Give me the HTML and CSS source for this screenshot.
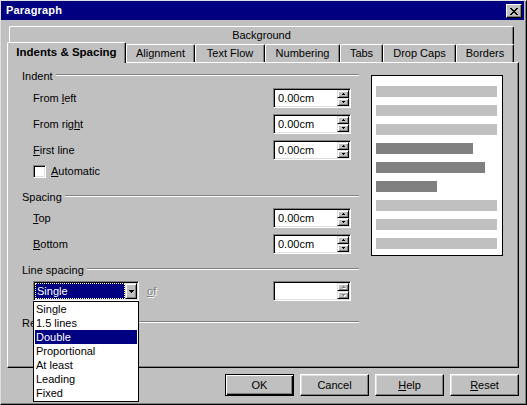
FILE: index.html
```html
<!DOCTYPE html>
<html>
<head>
<meta charset="utf-8">
<title>Paragraph</title>
<link rel="stylesheet" href="styles.css">
</head>
<body>
<div class="window">
  <div class="titlebar">
    <span class="title">Paragraph</span>
    <span class="close"><svg width="8" height="7" viewBox="0 0 8 7" shape-rendering="crispEdges"><path fill="#000" d="M0 0h2v1H0z M6 0h2v1H6z M1 1h2v1H1z M5 1h2v1H5z M2 2h4v1H2z M3 3h2v1H3z M2 4h4v1H2z M1 5h2v1H1z M5 5h2v1H5z M0 6h2v1H0z M6 6h2v1H6z"/></svg></span>
  </div>
  <div class="client">
    <div class="tabs">
      <div class="tabrow back">
        <div class="tab tab-bg">Background</div>
      </div>
      <div class="tabrow front">
        <div class="tab sel w-indent">Indents &amp; Spacing</div>
        <div class="tab w-align">Alignment</div>
        <div class="tab w-flow">Text Flow</div>
        <div class="tab w-num">Numbering</div>
        <div class="tab w-tabs">Tabs</div>
        <div class="tab w-drop">Drop Caps</div>
        <div class="tab w-bord">Borders</div>
      </div>
    </div>
    <div class="panel">
      <div class="leftcol">
        <div class="gtitle g-indent"><span>Indent</span></div>
        <div class="row first">
          <span class="lbl">From <u>l</u>eft</span>
          <div class="spin"><span class="val">0.00cm</span><span class="spinbtns"><span class="sb"><svg width="3" height="2" viewBox="0 0 3 2" shape-rendering="crispEdges"><path d="M1 0h1v1h1v1H0V1h1z"/></svg></span><span class="sb"><svg width="3" height="2" viewBox="0 0 3 2" shape-rendering="crispEdges"><path d="M0 0h3v1H2v1H1V1H0z"/></svg></span></span></div>
        </div>
        <div class="row">
          <span class="lbl">From rig<u>h</u>t</span>
          <div class="spin"><span class="val">0.00cm</span><span class="spinbtns"><span class="sb"><svg width="3" height="2" viewBox="0 0 3 2" shape-rendering="crispEdges"><path d="M1 0h1v1h1v1H0V1h1z"/></svg></span><span class="sb"><svg width="3" height="2" viewBox="0 0 3 2" shape-rendering="crispEdges"><path d="M0 0h3v1H2v1H1V1H0z"/></svg></span></span></div>
        </div>
        <div class="row">
          <span class="lbl"><u>F</u>irst line</span>
          <div class="spin"><span class="val">0.00cm</span><span class="spinbtns"><span class="sb"><svg width="3" height="2" viewBox="0 0 3 2" shape-rendering="crispEdges"><path d="M1 0h1v1h1v1H0V1h1z"/></svg></span><span class="sb"><svg width="3" height="2" viewBox="0 0 3 2" shape-rendering="crispEdges"><path d="M0 0h3v1H2v1H1V1H0z"/></svg></span></span></div>
        </div>
        <div class="checkrow">
          <span class="checkbox"></span>
          <span class="lbl"><u>A</u>utomatic</span>
        </div>

        <div class="gtitle g-spacing"><span>Spacing</span></div>
        <div class="row first2">
          <span class="lbl"><u>T</u>op</span>
          <div class="spin"><span class="val">0.00cm</span><span class="spinbtns"><span class="sb"><svg width="3" height="2" viewBox="0 0 3 2" shape-rendering="crispEdges"><path d="M1 0h1v1h1v1H0V1h1z"/></svg></span><span class="sb"><svg width="3" height="2" viewBox="0 0 3 2" shape-rendering="crispEdges"><path d="M0 0h3v1H2v1H1V1H0z"/></svg></span></span></div>
        </div>
        <div class="row">
          <span class="lbl"><u>B</u>ottom</span>
          <div class="spin"><span class="val">0.00cm</span><span class="spinbtns"><span class="sb"><svg width="3" height="2" viewBox="0 0 3 2" shape-rendering="crispEdges"><path d="M1 0h1v1h1v1H0V1h1z"/></svg></span><span class="sb"><svg width="3" height="2" viewBox="0 0 3 2" shape-rendering="crispEdges"><path d="M0 0h3v1H2v1H1V1H0z"/></svg></span></span></div>
        </div>

        <div class="gtitle g-line"><span>Line spacing</span></div>
        <div class="comborow">
          <div class="combo-wrap">
            <div class="combo">
              <span class="combo-sel">Single</span>
              <span class="combo-btn"><svg width="5" height="3" viewBox="0 0 5 3" shape-rendering="crispEdges"><path d="M0 0h5v1H4v1H3v1H2V2H1V1H0z"/></svg></span>
            </div>
            <ul class="listbox">
              <li>Single</li>
              <li>1.5 lines</li>
              <li class="hl">Double</li>
              <li>Proportional</li>
              <li>At least</li>
              <li>Leading</li>
              <li>Fixed</li>
            </ul>
          </div>
          <span class="disabled"><u>o</u>f</span>
          <div class="spin off"><span class="val"></span><span class="spinbtns"><span class="sb"><svg width="3" height="2" viewBox="0 0 3 2" shape-rendering="crispEdges"><path d="M1 0h1v1h1v1H0V1h1z"/></svg></span><span class="sb"><svg width="3" height="2" viewBox="0 0 3 2" shape-rendering="crispEdges"><path d="M0 0h3v1H2v1H1V1H0z"/></svg></span></span></div>
        </div>

        <div class="gtitle g-reg"><span>Register-true</span></div>
      </div>
      <div class="preview">
        <div class="bar light" style="width:121px"></div>
        <div class="bar light" style="width:121px"></div>
        <div class="bar light" style="width:121px"></div>
        <div class="bar dark" style="width:97px"></div>
        <div class="bar dark" style="width:109px"></div>
        <div class="bar dark" style="width:61px"></div>
        <div class="bar light" style="width:121px"></div>
        <div class="bar light" style="width:121px"></div>
        <div class="bar light" style="width:121px"></div>
      </div>
    </div>
    <div class="buttons">
      <div class="btn default">OK</div>
      <div class="btn">Cancel</div>
      <div class="btn"><span><u>H</u>elp</span></div>
      <div class="btn"><span><u>R</u>eset</span></div>
    </div>
  </div>
</div>
</body>
</html>
```
FILE: styles.css
```css
* { box-sizing: border-box; }
html, body { margin: 0; padding: 0; }
body {
  background: #c0c0c0;
  font-family: "Liberation Sans", Arial, sans-serif;
  font-size: 11px;
  line-height: 13px;
  color: #000;
}
u { text-decoration: underline; text-underline-offset: 1px; }

.window {
  width: 527px;
  height: 405px;
  background: #c0c0c0;
  border: 1px solid;
  border-color: #dfdfdf #000 #000 #dfdfdf;
  box-shadow: inset -1px -1px 0 #808080;
  padding: 0 2px 0 0;
  display: flex;
  flex-direction: column;
  overflow: hidden;
}

.titlebar {
  height: 19px;
  background: #000080;
  color: #fff;
  display: flex;
  align-items: center;
  justify-content: space-between;
  padding: 0 2px 0 5px;
}
.title { font-weight: bold; font-size: 11px; letter-spacing: 0.2px; }
.close {
  width: 16px;
  height: 14px;
  background: #c0c0c0;
  border: 1px solid;
  border-color: #fff #000 #000 #fff;
  box-shadow: inset -1px -1px 0 #808080;
  display: flex;
  align-items: center;
  justify-content: center;
  margin-top: 1px;
}

.client { padding: 6px 5px 0 6px; flex: 1; display: flex; flex-direction: column; }

.tabs { height: 36px; }
.tabrow { height: 18px; display: flex; }
.tabrow.back { padding-left: 2px; }
.tab {
  height: 18px;
  border-left: 1px solid #fff;
  border-top: 1px solid #fff;
  border-right: 1px solid #000;
  box-shadow: inset -1px 0 0 #808080;
  border-radius: 2px 2px 0 0;
  background: #c0c0c0;
  display: flex;
  align-items: center;
  justify-content: center;
  white-space: nowrap;
}
.tab-bg { width: 505px; padding-bottom: 1px; }
.tabrow.front { align-items: flex-start; }
.tab.sel {
  height: 21px;
  margin-top: -2px;
  position: relative;
  z-index: 2;
  font-weight: bold;
  font-size: 11.5px;
  padding-bottom: 2px;
}
.w-indent { width: 119px; }
.w-align { width: 69px; }
.w-flow { width: 70px; }
.w-num { width: 75px; }
.w-tabs { width: 43px; }
.w-drop { width: 73px; }
.w-bord { width: 58px; }

.panel {
  width: 512px;
  height: 306px;
  border: 1px solid;
  border-color: #fff #000 #000 #fff;
  box-shadow: inset -1px -1px 0 #808080;
  display: flex;
  position: relative;
}

.leftcol {
  width: 363px;
  padding: 6px 12px 0 14px;
  display: flex;
  flex-direction: column;
}

.gtitle {
  height: 14px;
  display: flex;
  align-items: center;
}
.gtitle::after {
  content: "";
  flex: 1;
  margin-left: 3px;
  margin-top: -2px;
  border-top: 1px solid #808080;
  border-bottom: 1px solid #fff;
}
.g-spacing { margin-top: 11px; }
.g-line { margin-top: 6px; }
.g-reg { margin-top: 15px; }

.row {
  height: 26px;
  display: flex;
  align-items: center;
  padding-left: 11px;
}
.row.first { margin-top: 2px; }
.row.first2 { margin-top: 1px; }
.lbl { flex: 1; }

.spin {
  width: 78px;
  height: 20px;
  margin-right: 8px;
  background: #fff;
  border: 1px solid;
  border-color: #808080 #fff #fff #808080;
  box-shadow: inset 1px 1px 0 #000, inset -1px -1px 0 #dfdfdf;
  padding: 1px;
  display: flex;
}
.val { flex: 1; padding-left: 3px; line-height: 16px; }
.spinbtns { width: 12px; display: flex; flex-direction: column; }
.sb {
  height: 8px;
  background: #c0c0c0;
  border: 1px solid;
  border-color: #dfdfdf #000 #000 #dfdfdf;
  box-shadow: inset 1px 1px 0 #fff, inset -1px -1px 0 #808080;
  display: flex;
  align-items: center;
  justify-content: center;
}
.sb svg { fill: #000; }
.spin.off .sb svg { fill: #808080; filter: drop-shadow(1px 1px 0 #fff); }

.checkrow {
  height: 16px;
  display: flex;
  align-items: center;
  padding-left: 11px;
}
.checkbox {
  width: 13px;
  height: 13px;
  background: #fff;
  border: 1px solid;
  border-color: #808080 #fff #fff #808080;
  box-shadow: inset 1px 1px 0 #000, inset -1px -1px 0 #dfdfdf;
  margin-right: 5px;
}

.comborow {
  margin-top: 4px;
  height: 20px;
  display: flex;
  align-items: center;
  padding-left: 11px;
}
.combo-wrap { position: relative; width: 106px; height: 20px; }
.combo {
  width: 106px;
  height: 20px;
  background: #fff;
  border: 1px solid;
  border-color: #808080 #fff #fff #808080;
  box-shadow: inset 1px 1px 0 #000, inset -1px -1px 0 #dfdfdf;
  padding: 1px;
  display: flex;
}
.combo-sel {
  flex: 1;
  background: #000080;
  color: #fff;
  border: 1px dotted #ffff9a;
  padding-left: 1px;
  line-height: 14px;
}
.combo-btn {
  width: 12px;
  background: #c0c0c0;
  border: 1px solid;
  border-color: #dfdfdf #000 #000 #dfdfdf;
  box-shadow: inset 1px 1px 0 #fff, inset -1px -1px 0 #808080;
  display: flex;
  align-items: center;
  justify-content: center;
}
.listbox {
  position: absolute;
  top: 20px;
  left: 0;
  width: 106px;
  margin: 0;
  padding: 0 0 1px;
  list-style: none;
  background: #fff;
  border: 1px solid #000;
  z-index: 10;
}
.listbox li {
  height: 14px;
  line-height: 14px;
  margin: 0 1px;
  padding-left: 1px;
}
.listbox li.hl { background: #000080; color: #fff; }

.disabled {
  margin-left: 8px;
  color: #808080;
  text-shadow: 1px 1px 0 #fff;
  flex: 1;
}

.preview {
  margin-top: 12px;
  width: 132px;
  height: 181px;
  background: #fff;
  border: 1px solid #000;
  padding: 10px 4px;
  display: flex;
  flex-direction: column;
  gap: 8px;
}
.bar { height: 11px; flex: none; }
.bar.light { background: #c0c0c0; }
.bar.dark { background: #808080; }

.buttons {
  margin-top: 6px;
  display: flex;
  justify-content: flex-end;
  gap: 6px;
}
.btn {
  width: 69px;
  height: 22px;
  background: #c0c0c0;
  border: 1px solid;
  border-color: #fff #000 #000 #fff;
  box-shadow: inset -1px -1px 0 #808080, inset 1px 1px 0 #dfdfdf;
  display: flex;
  align-items: center;
  justify-content: center;
}
.btn.default {
  border-color: #000;
  box-shadow: inset 1px 1px 0 #fff, inset -1px -1px 0 #000, inset -2px -2px 0 #808080;
}
```
